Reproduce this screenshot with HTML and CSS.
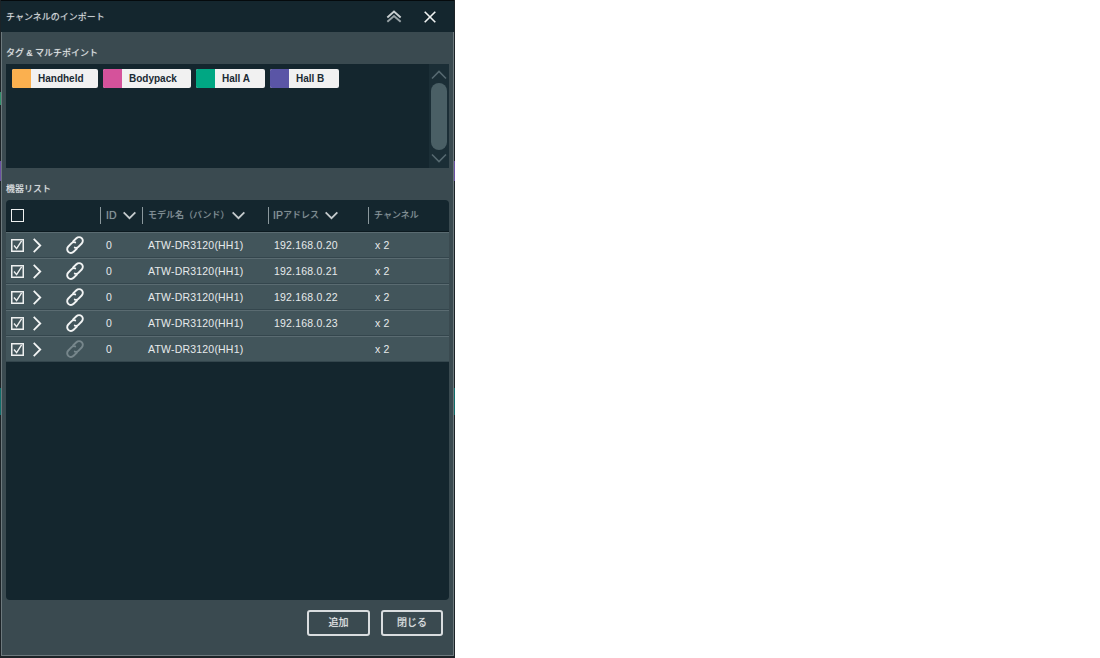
FILE: index.html
```html
<!DOCTYPE html>
<html lang="ja">
<head>
<meta charset="utf-8">
<title>チャンネルのインポート</title>
<link rel="stylesheet" href="styles.css">
</head>
<body>
<svg class="defs" width="0" height="0" aria-hidden="true">
  <defs>
    <symbol id="link" viewBox="0 0 20 20">
      <path d="M8.1 6.4 L11.4 3.2 C12.9 1.7 15.2 1.7 16.7 3.2 C18.2 4.7 18.2 7 16.7 8.5 L13.4 11.8 C12.5 12.7 11.1 13.1 9.8 12.6" fill="none" stroke="currentColor" stroke-width="1.9" stroke-linecap="round"/>
      <path d="M11.9 13.6 L8.6 16.8 C7.1 18.3 4.8 18.3 3.3 16.8 C1.8 15.3 1.8 13 3.3 11.5 L6.6 8.2 C7.5 7.3 8.9 6.9 10.2 7.4" fill="none" stroke="currentColor" stroke-width="1.9" stroke-linecap="round"/>
    </symbol>
    <symbol id="chev-down" viewBox="0 0 16 10">
      <path d="M1.5 1.5 L8 8 L14.5 1.5" fill="none" stroke="currentColor" stroke-width="2"/>
    </symbol>
    <symbol id="chev-right" viewBox="0 0 10 16">
      <path d="M1.5 1 L8.5 8 L1.5 15" fill="none" stroke="currentColor" stroke-width="1.9"/>
    </symbol>
    <symbol id="check" viewBox="0 0 13 13">
      <rect x="0.75" y="0.75" width="11.5" height="11.5" fill="none" stroke="currentColor" stroke-width="1.5"/>
      <path d="M3 6.5 L5.6 9.6 L10.6 1.8" fill="none" stroke="currentColor" stroke-width="1.4"/>
    </symbol>
  </defs>
</svg>
<div class="window">
  <header class="titlebar">
    <span class="title">チャンネルのインポート</span>
    <div class="title-actions">
      <svg class="icon-collapse" viewBox="0 0 18 14" width="16" height="13">
        <path d="M1.5 8 L9 1.5 L16.5 8" fill="none" stroke="#c9cfd1" stroke-width="2.2"/>
        <path d="M1.5 13 L9 6.5 L16.5 13" fill="none" stroke="#98a2a6" stroke-width="2.2"/>
      </svg>
      <svg class="icon-close" viewBox="0 0 12 12" width="12" height="12">
        <path d="M0.7 0.7 L11.3 11.3 M11.3 0.7 L0.7 11.3" stroke="#f0f2f2" stroke-width="1.6"/>
      </svg>
    </div>
  </header>
  <main class="content">
    <h2 class="section-label">タグ &amp; マルチポイント</h2>
    <section class="tag-panel">
      <div class="tags">
        <div class="tag tag-handheld"><span class="swatch orange"></span><span class="tag-name">Handheld</span></div>
        <div class="tag tag-bodypack"><span class="swatch pink"></span><span class="tag-name">Bodypack</span></div>
        <div class="tag tag-hall"><span class="swatch teal"></span><span class="tag-name">Hall A</span></div>
        <div class="tag tag-hall"><span class="swatch purple"></span><span class="tag-name">Hall B</span></div>
      </div>
      <div class="scrollbar">
        <svg class="scroll-arrow" viewBox="0 0 16 10" width="16" height="10"><path d="M1 8.5 L8 1.5 L15 8.5" fill="none" stroke="#566970" stroke-width="1.6"/></svg>
        <div class="scroll-thumb"></div>
        <svg class="scroll-arrow" viewBox="0 0 16 10" width="16" height="10"><path d="M1 1.5 L8 8.5 L15 1.5" fill="none" stroke="#566970" stroke-width="1.6"/></svg>
      </div>
    </section>
    <h2 class="section-label">機器リスト</h2>
    <section class="device-panel">
      <div class="row-grid head">
        <span class="box"></span>
        <span></span>
        <span></span>
        <span class="th"><span class="latin">ID</span><svg class="sort"><use href="#chev-down"/></svg></span>
        <span class="th">モデル名（バンド）<svg class="sort sort-tight"><use href="#chev-down"/></svg></span>
        <span class="th th-ip"><span class="latin">IP</span>アドレス<svg class="sort"><use href="#chev-down"/></svg></span>
        <span class="th">チャンネル</span>
      </div>
      <div class="row-grid row">
        <svg class="chk"><use href="#check"/></svg><svg class="exp"><use href="#chev-right"/></svg><svg class="lnk"><use href="#link"/></svg>
        <span class="td">0</span><span class="td">ATW-DR3120(HH1)</span><span class="td">192.168.0.20</span><span class="td">x 2</span>
      </div>
      <div class="row-grid row">
        <svg class="chk"><use href="#check"/></svg><svg class="exp"><use href="#chev-right"/></svg><svg class="lnk"><use href="#link"/></svg>
        <span class="td">0</span><span class="td">ATW-DR3120(HH1)</span><span class="td">192.168.0.21</span><span class="td">x 2</span>
      </div>
      <div class="row-grid row">
        <svg class="chk"><use href="#check"/></svg><svg class="exp"><use href="#chev-right"/></svg><svg class="lnk"><use href="#link"/></svg>
        <span class="td">0</span><span class="td">ATW-DR3120(HH1)</span><span class="td">192.168.0.22</span><span class="td">x 2</span>
      </div>
      <div class="row-grid row">
        <svg class="chk"><use href="#check"/></svg><svg class="exp"><use href="#chev-right"/></svg><svg class="lnk"><use href="#link"/></svg>
        <span class="td">0</span><span class="td">ATW-DR3120(HH1)</span><span class="td">192.168.0.23</span><span class="td">x 2</span>
      </div>
      <div class="row-grid row">
        <svg class="chk"><use href="#check"/></svg><svg class="exp"><use href="#chev-right"/></svg><svg class="lnk off"><use href="#link"/></svg>
        <span class="td">0</span><span class="td">ATW-DR3120(HH1)</span><span class="td"></span><span class="td">x 2</span>
      </div>
    </section>
    <footer class="actions">
      <button class="btn btn-add">追加</button>
      <button class="btn btn-close">閉じる</button>
    </footer>
  </main>
</div>
</body>
</html>
```
FILE: styles.css
```css
* { box-sizing: border-box; }
html, body { margin: 0; padding: 0; height: 100%; background: #fff; }
body { font-family: "Liberation Sans", "Noto Sans CJK JP", sans-serif; }
.defs { position: absolute; }

/* the 1px strips at either side show the desktop behind the window */
.window {
  width: 455px;
  height: 658px;
  display: flex;
  flex-direction: column;
  padding: 0 1px 2px;
  background-color: #1c2327;
  background-image:
    linear-gradient(#1c2327 92px, #2f8f6a 92px, #2f8f6a 105px, #1c2327 105px, #1c2327 161px, #6a4fa3 161px, #6a4fa3 181px, #1c2327 181px, #1c2327 388px, #0f6d6a 388px, #0f6d6a 415px, #1c2327 415px),
    linear-gradient(#1c2327 161px, #6a4fa3 161px, #6a4fa3 181px, #1c2327 181px, #1c2327 388px, #0f6d6a 388px, #0f6d6a 415px, #1c2327 415px);
  background-size: 1px 100%, 1px 100%;
  background-position: left top, right top;
  background-repeat: no-repeat;
}

.titlebar {
  height: 32px;
  flex: none;
  background: #14262e;
  border-top: 1px solid #050a0d;
  display: flex;
  align-items: center;
  justify-content: space-between;
  padding: 0 18px 0 5px;
}
.title { font-size: 9px; color: #d5dadc; text-shadow: 0 0 1px rgba(213, 218, 220, .6); }
.title-actions { display: flex; align-items: center; gap: 22px; }
.icon-collapse, .icon-close { display: block; }

.content {
  flex: 1;
  display: flex;
  flex-direction: column;
  padding: 0 4px 0 4px;
  border-left: 1px solid #6d797d;
  border-right: 1px solid #6d797d;
  border-bottom: 1px solid #6d797d;
  min-height: 0;
  background: #3a4a50;
}

.section-label {
  margin: 0;
  height: 32px;
  padding-top: 14px;
  font-size: 9px;
  font-weight: normal;
  color: #e2e6e7;
  line-height: 14px;
  text-shadow: 0 0 1px rgba(226, 230, 231, .6);
}

.tag-panel {
  height: 104px;
  flex: none;
  background: #14262e;
  display: flex;
  justify-content: space-between;
}
.tags { display: flex; gap: 5px; padding: 5px 0 0 6px; align-items: flex-start; }
.tag {
  height: 19px;
  background: #f1f1f1;
  border-radius: 2px;
  display: flex;
  overflow: hidden;
}
.tag-handheld { width: 86px; }
.tag-bodypack { width: 88px; }
.tag-hall { width: 69px; }
.swatch { width: 19px; flex: none; }
.orange { background: #fbb04f; }
.pink { background: #d5529b; }
.teal { background: #00a783; }
.purple { background: #5a55a6; }
.tag-name {
  flex: 1;
  padding-left: 7px;
  font-size: 10px;
  font-weight: bold;
  line-height: 19px;
  color: #1a2a33;
  white-space: nowrap;
}

.scrollbar {
  width: 20px;
  background: #1b2e36;
  display: flex;
  flex-direction: column;
  align-items: center;
  padding-top: 6px;
  gap: 3px;
}
.scroll-thumb {
  width: 16px;
  height: 67px;
  border-radius: 8px;
  background: #4a5f65;
}
.scroll-arrow { display: block; flex: none; }

.device-panel {
  height: 400px;
  flex: none;
  background: #14262e;
  border-radius: 4px;
  overflow: hidden;
}
.row-grid {
  display: grid;
  grid-template-columns: 26px 28px 40px 42px 126px 100px 1fr;
  align-items: center;
}
.head {
  height: 32px;
  border-bottom: 1px solid #0c1a20;
}
.box {
  width: 13px;
  height: 13px;
  border: 1.5px solid #eef0f0;
  margin-left: 5px;
}
.th {
  font-size: 9px;
  color: #8b989d;
  border-left: 1px solid #8b989d;
  height: 17px;
  line-height: 17px;
  padding-left: 5px;
  display: flex;
  align-items: center;
  white-space: nowrap;
  text-shadow: 0 0 1px rgba(139, 152, 157, .6);
}
.th-ip { padding-left: 4px; }
.latin { font-size: 10.5px; }
.sort { width: 15px; height: 9px; margin-left: 5px; color: #c5cbcd; flex: none; }
.sort-tight { margin-left: 2px; }

.row {
  height: 26px;
  background: #42555b;
  border-top: 1px solid #5a6b71;
  border-bottom: 1px solid #34464d;
}
.chk { width: 13px; height: 13px; margin-left: 5px; color: #eef0f0; }
.exp { width: 10px; height: 15px; color: #f2f4f4; }
.lnk { width: 20px; height: 20px; color: #f2f4f4; margin-left: 5px; }
.lnk.off { color: #77878c; }
.td {
  font-size: 10.5px;
  letter-spacing: .2px;
  color: #e6eaeb;
  padding-left: 6px;
  white-space: nowrap;
}
.td:last-child { padding-left: 7px; }

.actions {
  flex: 1;
  display: flex;
  justify-content: flex-end;
  gap: 11px;
  padding: 10px 6px 0 0;
  align-items: flex-start;
}
.btn {
  height: 26px;
  background: transparent;
  border: 2px solid #d9dddf;
  border-radius: 3px;
  color: #e6e9ea;
  font-family: inherit;
  font-size: 10px;
  padding: 0 0 3px;
  text-shadow: 0 0 1px rgba(230, 233, 234, .6);
}
.btn-add { width: 63px; }
.btn-close { width: 62px; }
```
